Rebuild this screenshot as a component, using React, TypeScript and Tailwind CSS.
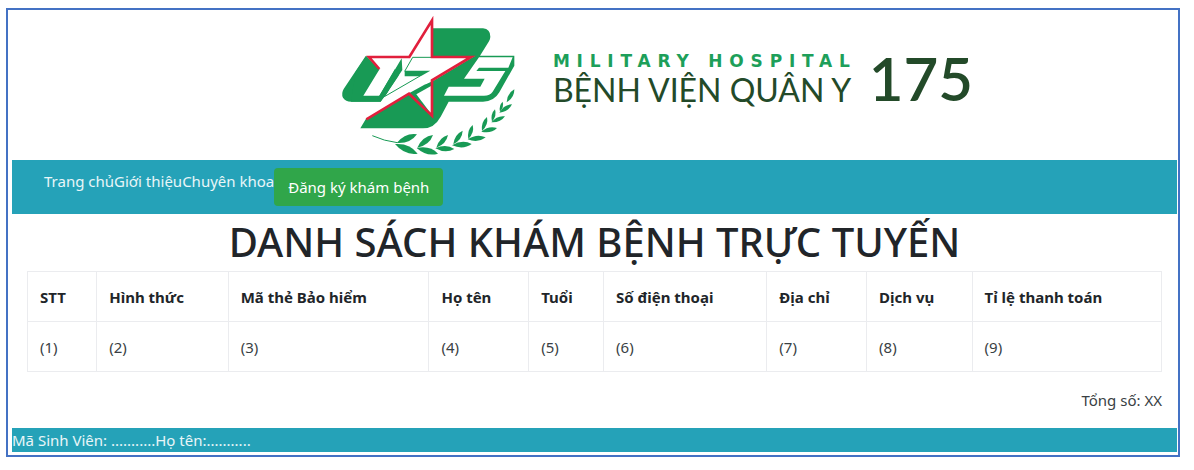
const columns = [
  { label: "STT", width: "w-[6.1%]" },
  { label: "Hình thức", width: "w-[11.6%]" },
  { label: "Mã thẻ Bảo hiểm", width: "w-[17.7%]" },
  { label: "Họ tên", width: "w-[8.8%]" },
  { label: "Tuổi", width: "w-[6.6%]" },
  { label: "Số điện thoại", width: "w-[14.4%]" },
  { label: "Địa chỉ", width: "w-[8.8%]" },
  { label: "Dịch vụ", width: "w-[9.3%]" },
  { label: "Tỉ lệ thanh toán", width: "w-[16.7%]" },
];

// Laurel leaves: base x, base y, tip x, tip y
const leaves = [
  [203, 414, 264, 388],
  [198, 417, 266, 446],
  [265, 428, 312, 390],
  [263, 429, 327, 446],
  [322, 428, 357, 390],
  [319, 430, 376, 432],
  [373, 418, 401, 377],
  [369, 421, 428, 417],
  [418, 402, 431, 360],
  [416, 403, 470, 397],
  [459, 378, 474, 336],
  [457, 380, 504, 369],
  [489, 350, 498, 313],
  [487, 352, 528, 334],
  [513, 320, 521, 290],
  [511, 323, 549, 298],
  [533, 292, 556, 253],
];

function leafPath([x1, y1, x2, y2]: number[]) {
  const dx = x2 - x1;
  const dy = y2 - y1;
  const mx = x1 + dx * 0.55;
  const my = y1 + dy * 0.55;
  const bulge = 0.28;
  return `M${x1} ${y1}Q${mx - dy * bulge} ${my + dx * bulge} ${x2} ${y2}Q${mx + dy * bulge} ${my - dx * bulge} ${x1} ${y1}Z`;
}

function Emblem() {
  return (
    <svg viewBox="30 15 540 435" className="w-[180px] h-[145px] shrink-0" aria-hidden="true">
      <g fill="#189a55">
        <path d="M312 70H462Q484 72 484 95Q484 102 480 109L453 152H556V182L511 262Q495 290 462 290H359L335 335Q316 370 282 370H94L110 343L240 265L312 225V153Z" />
        <path d="M110 153L44 252Q36 266 42 278Q50 290 66 290H155L170 270L220 195V160L150 195Z" />
      </g>
      <path fill="#fff" d="M312 35L240 153H112L160 195L290 238L312 228L437 153H312Z" />
      <path fill="#189a55" d="M112 153L150 192L190 165L200 200L155 290H66L80 200Z" />
      <path fill="#fff" d="M128 159H217L151 272H103L152 192Z" />
      <path fill="#189a55" d="M218 160L151 272L140 288H155L170 270L220 195Z" />
      <path fill="#189a55" d="M227 197H304L275 214H227Z" />
      <path fill="none" stroke="#189a55" strokeWidth="3" d="M227 199L251 157H306M273 213L166 275L178 256" />
      <path fill="#fff" d="M262 268L306 243V326Z" />
      <path fill="#fff" d="M450 157H551L538 188H450L442 198H529L491 260Q483 272 465 272H345L359 245H454L467 221H405Z" />
      <path
        fill="none"
        stroke="#e11f3c"
        strokeWidth="8"
        strokeMiterlimit="8"
        d="M151 192L120 156H241L309 46V156H426L309 226V332L240 266L112 343"
      />
      <path fill="none" stroke="#189a55" strokeWidth="3" d="M130 392Q165 408 205 413" />
      {leaves.map((leaf) => (
        <path key={leaf.join()} fill="#189a55" d={leafPath(leaf)} />
      ))}
    </svg>
  );
}

const links = ["Trang chủ", "Giới thiệu", "Chuyên khoa"];

export default function App() {
  return (
    <div className="mt-2 ml-1.5 mr-3.5 border-2 border-[#4472c4] bg-white pl-1 pr-px pb-[3px] font-['Noto_Sans',sans-serif] text-[15px] leading-6 text-[#212529]">
      <header className="flex h-[150px] items-start justify-center pl-[123px]">
        <Emblem />
        <div className="flex items-start gap-3 pt-10 pl-[34px] font-['Lato',sans-serif] text-[#234a29]">
          <div className="flex flex-col">
            <span className="font-['DejaVu_Sans',sans-serif] text-[17px] leading-[22px] font-bold tracking-[0.4em] text-[#1d9f5a]">
              MILITARY HOSPITAL
            </span>
            <span className="text-[32px] leading-[36px]">BỆNH VIỆN QUÂN Y</span>
          </div>
          <span className="text-[60px] leading-[56px] font-semibold">175</span>
        </div>
      </header>

      <nav className="flex items-start bg-[#25a2b8] pt-2 pb-2 pl-8 text-white">
        {links.map((link) => (
          <a key={link} href="#" className="leading-[26px] text-white/90">
            {link}
          </a>
        ))}
        <button type="button" className="h-[38px] rounded bg-[#30a64a] px-3.5 text-white">
          Đăng ký khám bệnh
        </button>
      </nav>

      <main className="px-[15px]">
        <h1 className="pb-px text-center text-[40px] leading-[56px] font-medium">
          DANH SÁCH KHÁM BỆNH TRỰC TUYẾN
        </h1>
        <table className="w-full table-fixed border-collapse text-left">
          <thead>
            <tr className="h-[50px]">
              {columns.map((column) => (
                <th key={column.label} className={`border border-[#ebecef] px-3 font-bold ${column.width}`}>
                  {column.label}
                </th>
              ))}
            </tr>
          </thead>
          <tbody>
            <tr className="h-[50px]">
              {columns.map((column, index) => (
                <td key={column.label} className="border border-[#ebecef] px-3 text-[#3a3f44]">
                  ({index + 1})
                </td>
              ))}
            </tr>
          </tbody>
        </table>
        <p className="pt-4 pb-4 text-right text-[#3a3f44]">Tổng số: XX</p>
      </main>

      <footer className="bg-[#25a2b8] text-white/90">Mã Sinh Viên: ...........Họ tên:...........</footer>
    </div>
  );
}
